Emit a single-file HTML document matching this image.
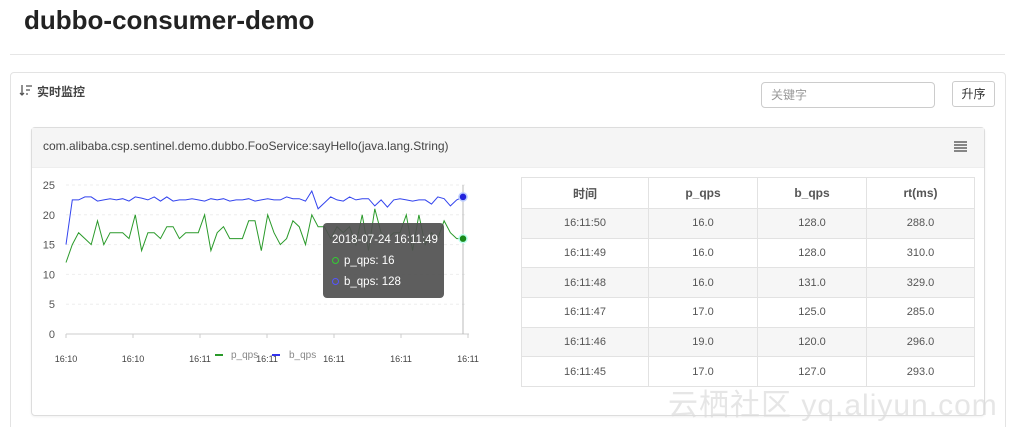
<!DOCTYPE html>
<html><head><meta charset="utf-8"><style>
*{margin:0;padding:0;box-sizing:border-box}
html,body{width:1014px;height:427px;overflow:hidden}
body{background:#fff;font-family:"Liberation Sans","Noto Sans CJK SC",sans-serif;color:#333;position:relative}
.abs{position:absolute}
h1{position:absolute;left:24px;top:5px;font-size:26px;font-weight:bold;color:#222}
.hr{left:10px;top:54px;width:995px;height:1px;background:#e6e6e6}
.panel{left:10px;top:72px;width:996px;height:360px;border:1px solid #e3e3e3;border-radius:4px}
.card{left:31px;top:127px;width:954px;height:289px;border:1px solid #ddd;border-radius:4px;box-shadow:0 1px 2px rgba(0,0,0,.06)}
.chead{left:0;top:0;width:952px;height:40px;background:#f5f5f5;border-bottom:1px solid #eee}
table{position:absolute;left:521px;top:177px;width:454px;border-collapse:collapse;font-size:11px;color:#555}
td,th{border:1px solid #e2e2e2;height:29.7px;text-align:center;font-weight:normal}
th{font-weight:bold;color:#555;font-size:12px;height:31px}
tr:nth-child(even) td{background:#f6f6f6}
</style></head><body>
<h1>dubbo-consumer-demo</h1>
<div class="abs hr"></div>
<div class="abs panel"></div>
<svg class="abs" style="left:19px;top:84px" width="14" height="13" viewBox="0 0 14 13"><path d="M3 1v10M1 9l2 2 2-2M7 2h6M7 6h4M7 10h2" stroke="#555" stroke-width="1.3" fill="none"/></svg>
<div class="abs" style="left:37px;top:83px;font-size:12px;font-weight:bold;color:#444">实时监控</div>
<div class="abs" style="left:761px;top:82px;width:174px;height:26px;border:1px solid #ccc;border-radius:4px;font-size:12px;color:#999;padding:0 9px;line-height:24px">关键字</div>
<div class="abs" style="left:952px;top:81px;width:43px;height:26px;border:1px solid #ccc;border-radius:3px;font-size:12px;color:#333;text-align:center;line-height:24px">升序</div>
<div class="abs card"><div class="abs chead"></div>
<div class="abs" style="left:11px;top:11px;font-size:12px;color:#444">com.alibaba.csp.sentinel.demo.dubbo.FooService:sayHello(java.lang.String)</div>
<svg class="abs" style="left:922px;top:13px" width="13" height="11"><path d="M0 1h13M0 4h13M0 7h13M0 10h13" stroke="#444" stroke-width="1.3"/></svg>
</div>
<svg id="ch" class="abs" style="left:0;top:0" width="500" height="427"></svg>
<div class="abs" style="left:323px;top:223px;width:121px;height:75px;background:rgba(80,80,80,.92);border-radius:4px;color:#fff;font-size:11.5px">
<div style="position:absolute;left:9px;top:11px">2018-07-24 16:11:49</div>
<div style="position:absolute;left:9px;top:32px"><span style="display:inline-block;width:7px;height:7px;border:1.5px solid #3c3;border-radius:50%;margin-right:5px"></span>p_qps: 16</div>
<div style="position:absolute;left:9px;top:53px"><span style="display:inline-block;width:7px;height:7px;border:1.5px solid #55f;border-radius:50%;margin-right:5px"></span>b_qps: 128</div>
</div>
<table>
<tr><th style="width:127px">时间</th><th style="width:109px">p_qps</th><th style="width:109px">b_qps</th><th>rt(ms)</th></tr>
<tr><td>16:11:50</td><td>16.0</td><td>128.0</td><td>288.0</td></tr>
<tr><td>16:11:49</td><td>16.0</td><td>128.0</td><td>310.0</td></tr>
<tr><td>16:11:48</td><td>16.0</td><td>131.0</td><td>329.0</td></tr>
<tr><td>16:11:47</td><td>17.0</td><td>125.0</td><td>285.0</td></tr>
<tr><td>16:11:46</td><td>19.0</td><td>120.0</td><td>296.0</td></tr>
<tr><td>16:11:45</td><td>17.0</td><td>127.0</td><td>293.0</td></tr>
</table>
<div class="abs" style="left:668px;top:380px;font-size:30px;color:rgba(220,220,220,.7);letter-spacing:1px">云栖社区 yq.aliyun.com</div>
<script>
var g=[12,15,17,16,15,19,15,17,17,17,16,20,14,17,17,16,18,18,16,17,17,17,20,14,17,18,16,16,16,19,19,14,20,17,15,16,19,18,15,20,18,18,16,18,17,18,15,20,14,21,17,16,17,17,20,14,20,15,17,16,19,17,16,16];
var b=[15,22.5,22.5,23,23,22.3,22.5,22.7,22.5,22.7,22.3,23,22.8,22.5,23,22.3,23,22.3,22.5,22.5,22.7,22.5,22.3,22.7,22.5,22.7,22.3,22.5,22.5,22.7,22.3,22.5,22.7,22.5,22.5,23,22.7,22.7,22.3,24,21,22,23,22.5,22.3,23,22.5,22.7,22.7,21.5,22.5,21.3,22.5,22.7,22.5,22.3,22.5,22.5,21.8,23,22.7,21.5,22.5,23];
function Y(v){return 334-v*5.96}
function X(i,n){return 66+i*397/(n-1)}
function pts(a){return a.map(function(v,i){return X(i,a.length).toFixed(1)+','+Y(v).toFixed(1)}).join(' ')}
var s='';
[0,5,10,15,20,25].forEach(function(v){var y=Y(v);s+='<line x1="66" x2="466" y1="'+y+'" y2="'+y+'" stroke="#eee" stroke-dasharray="3,3"/><text x="55" y="'+(y+4)+'" font-size="11" fill="#555" text-anchor="end">'+v+'</text>';});
s+='<line x1="66" x2="469" y1="334" y2="334" stroke="#ccc"/><line x1="463" x2="463" y1="185" y2="334" stroke="#bbb"/>';
var lb=['16:10','16:10','16:11','16:11','16:11','16:11','16:11'];
for(var i=0;i<7;i++){var x=66+i*67;s+='<line x1="'+x+'" x2="'+x+'" y1="334" y2="338" stroke="#ccc"/><text x="'+x+'" y="362" font-size="9" fill="#444" text-anchor="middle">'+lb[i]+'</text>';}
s+='<polyline points="'+pts(g)+'" fill="none" stroke="#2a9a2a" stroke-width="1"/>';
s+='<polyline points="'+pts(b)+'" fill="none" stroke="#3344ee" stroke-width="1"/>';
s+='<circle cx="463" cy="'+Y(16)+'" r="4" fill="#1a8a1a" stroke="#bfe" stroke-width="1.5"/><circle cx="463" cy="'+Y(23)+'" r="4" fill="#22d" stroke="#bcf" stroke-width="1.5"/>';
s+='<line x1="215" x2="223" y1="355" y2="355" stroke="#2a9a2a" stroke-width="2"/><text x="231" y="358" font-size="10" fill="#888">p_qps</text>';
s+='<line x1="272" x2="280" y1="355" y2="355" stroke="#33e" stroke-width="2"/><text x="289" y="358" font-size="10" fill="#888">b_qps</text>';
document.getElementById('ch').innerHTML=s;
</script>
</body></html>
